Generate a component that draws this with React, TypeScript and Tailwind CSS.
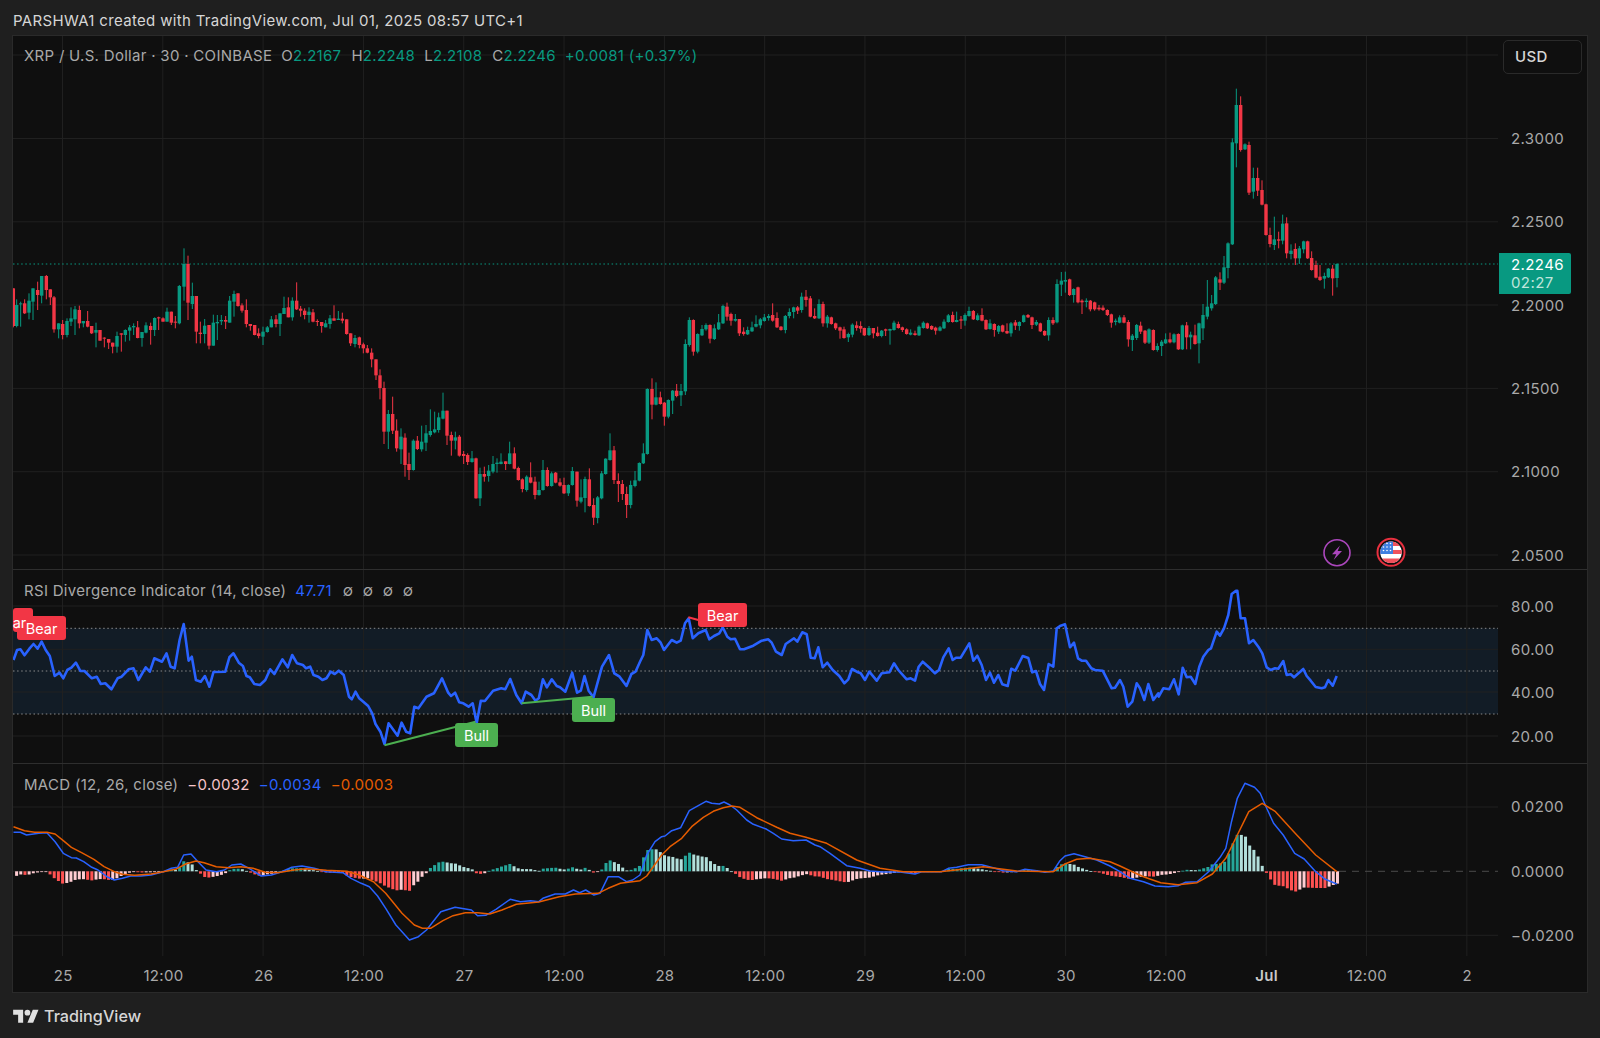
import React from "react";

type Bar = { x: number; t: number; b: number; wt: number; wb: number; g: boolean };

const parseBars = (raw: string, ox: number, oy: number): Bar[] =>
  raw
    .split(";")
    .map((s) => s.trim())
    .filter(Boolean)
    .map((s) => {
      const [zx, c, t, b, wt, wb] = s.split(/\s+/);
      return {
        x: ox + Number(zx) / 3,
        t: oy + Number(t) / 3,
        b: oy + Number(b) / 3,
        wt: oy + Number(wt) / 3,
        wb: oy + Number(wb) / 3,
        g: c === "g",
      };
    });

const S1 = `40 r 145 258 145 262;50 g 195 258 178 262;62 g 190 192 185 260;74 r 190 220 178 222;87 g 182 218 160 238;99 g 145 185 145 240;113 r 150 165 125 210;125 g 108 167 108 190;139 r 108 150 105 178;151 r 148 172 148 195;162 r 172 268 168 278;176 g 250 268 250 295;188 r 252 285 240 298;201 g 243 285 235 292;213 g 235 245 202 258;225 g 208 238 198 285;238 r 210 250 197 265;250 g 243 250 243 262;263 r 243 260 213 262;275 r 258 280 258 282;288 g 270 278 248 322;300 r 270 302 270 302;313 r 293 296 292 322;326 r 297 308 297 327;338 r 308 320 308 340;351 g 288 320 275 338;364 r 280 284 280 335;376 g 270 285 268 305;389 g 262 272 255 302;401 g 258 262 250 285;413 r 262 294 243 295;426 g 276 294 276 320;438 g 256 278 247 280;452 r 258 270 248 314;464 g 234 270 232 288;476 r 232 235 230 270;489 r 235 245 232 245;501 g 215 245 203 245;514 r 215 248 215 255;526 r 245 248 228 265;538 g 138 250 135 253;552 g 72 140 25 182;564 r 72 188 47 240;577 g 168 192 128 207;589 r 168 275 168 310;601 r 278 282 245 310;614 g 257 282 237 310;627 r 255 317 255 328;640 g 248 317 224 317;652 g 246 250 225 300;664 g 240 244 225 255;677 r 240 245 228 267;689 g 182 248 168 248;702 g 162 185 152 230;714 r 160 198 160 200;726 r 196 212 190 218;739 r 210 252 178 262;751 r 252 258 252 272;764 r 255 285 255 286;776 r 280 288 265 295;789 g 275 290 260 315;802 g 262 276 258 278;814 g 238 262 228 262;828 r 238 252 225 262;840 g 220 252 220 288;852 g 204 222 170 222;865 r 202 232 172 232;877 g 182 232 172 242;890 r 182 208 127 210;902 r 206 212 198 230;914 r 212 225 205 238;927 g 215 225 202 248;939 r 217 245 207 247;952 r 243 246 238 258;965 r 246 258 246 278;977 g 250 262 240 262;990 g 235 252 225 266;1002 r 235 242 196 242;1015 g 236 240 213 240;1027 r 236 242 218 250;1040 r 238 282 238 284;1052 r 280 310 280 318;1065 g 294 312 285 322;1078 r 292 315 290 325;1090 r 313 325 308 340;1102 r 325 338 315 340;1115 r 338 358 325 382;1128 r 358 406 358 420;1140 r 406 444 388 478;1152 r 444 575 425 612;1165 g 522 575 510 627;1178 r 522 572 470 582;1190 r 572 625 538 635`;

const S2 = `3 g 440 478 415 522;15 r 443 525 430 560;27 r 522 540 488 570;40 g 452 540 448 542;52 r 452 477 438 480;65 g 455 478 407 485;78 g 430 458 405 483;91 g 423 435 358 440;104 g 418 427 365 430;116 g 382 420 368 428;129 g 362 386 308 388;141 r 362 437 362 465;154 r 435 452 425 497;166 g 442 452 425 478;178 r 440 497 435 500;191 r 492 498 483 522;203 r 495 516 490 525;216 g 505 516 483 518;228 r 505 625 503 626;240 g 552 625 533 648;253 r 552 560 530 575;266 g 542 558 525 575;279 g 522 545 498 550;291 g 518 522 505 548;303 g 515 522 490 523;317 r 514 522 514 540;329 g 490 522 455 523;343 r 490 536 472 538;355 r 534 570 530 572;367 r 568 597 565 607;380 g 560 600 556 605;392 r 562 578 517 580;405 r 575 615 560 628;417 g 600 615 575 617;429 g 540 600 510 602;442 r 540 588 532 590;455 g 550 588 545 590;467 r 548 578 546 580;480 r 577 587 565 590;492 r 585 610 563 612;505 g 585 610 583 618;517 g 543 585 531 587;531 r 545 632 545 650;543 g 622 635 568 640;555 g 567 624 560 667;568 r 568 648 535 650;581 r 645 683 625 705;593 g 622 684 618 700;605 g 550 625 543 628;617 g 506 552 505 554;630 g 481 510 430 512;642 r 481 570 468 582;655 r 573 582 550 636;667 r 582 612 570 630;680 r 612 645 590 684;692 g 585 645 572 655;705 g 571 588 543 592;718 g 519 572 517 574;730 g 490 520 460 522;742 g 297 492 295 494;756 r 297 344 265 388;768 g 322 344 277 346;781 r 322 342 305 344;793 r 338 380 336 407;805 g 330 380 328 385;818 g 302 332 300 372;830 r 302 318 282 322;843 g 303 316 282 348;856 g 162 304 148 315;868 g 90 165 82 170;880 r 90 185 88 197;893 g 132 185 130 190;906 g 117 136 105 138;918 g 105 118 100 122;930 r 105 146 103 160;943 g 115 147 103 150;956 g 97 118 72 120;969 g 48 100 44 102;981 r 50 80 38 92;993 r 72 92 68 107;1006 g 87 92 72 95;1018 r 87 130 87 138;1031 r 125 132 112 137;1043 g 120 133 110 135;1056 g 112 124 95 126;1068 g 102 110 76 112;1081 g 88 106 84 115;1093 g 82 93 72 95;1106 g 78 84 72 92;1118 r 75 92 40 95;1131 r 84 112 67 114;1143 r 110 120 108 122;1156 g 78 120 75 130;1168 g 66 78 55 85;1181 g 52 66 50 85;1193 r 52 62 48 72`;

const S3 = `5 g 110 150 98 158;18 r 110 120 90 140;31 r 115 170 108 172;44 r 168 175 145 177;57 g 132 175 118 177;69 r 132 190 125 200;82 g 170 190 165 203;94 r 172 192 170 194;107 r 190 205 188 210;120 r 202 212 200 236;132 r 208 234 200 236;145 g 222 232 218 246;157 g 194 224 190 232;170 r 196 204 184 212;182 r 198 206 184 218;193 r 204 226 203 228;207 g 204 225 198 228;220 r 204 220 204 235;233 r 218 228 200 230;245 g 212 228 210 232;257 r 208 212 206 228;270 g 207 212 206 254;282 g 188 210 182 212;295 r 192 204 185 206;307 r 202 210 200 216;320 r 208 222 205 224;332 g 218 224 208 226;345 r 220 225 212 227;357 g 200 226 196 228;370 g 188 204 184 206;382 r 190 205 188 207;395 r 198 208 196 210;407 r 203 212 200 224;420 g 202 212 198 214;432 g 185 205 178 207;445 g 166 186 162 188;458 r 165 186 155 188;470 g 180 186 155 187;483 r 178 182 168 207;495 g 165 182 160 197;507 g 153 168 140 170;520 r 153 178 150 180;533 g 166 180 160 182;546 r 165 182 145 184;558 r 180 208 178 210;570 g 190 207 178 209;583 r 192 210 190 230;596 g 198 215 195 222;608 r 196 215 194 217;621 r 213 220 190 222;633 g 190 220 186 230;646 r 187 197 180 210;658 g 186 198 184 212;671 g 166 186 164 188;684 r 165 172 162 174;696 r 172 195 170 207;709 g 186 194 180 198;721 r 190 214 188 216;734 r 213 226 211 228;746 g 180 226 172 242;759 r 180 190 172 195;771 g 72 187 58 190;784 g 62 74 36 108;796 g 60 65 35 98;809 r 58 105 56 108;821 g 87 105 85 128;834 r 82 127 80 130;846 r 122 127 118 162;859 g 122 126 115 142;871 r 122 148 120 154;884 r 127 148 125 152;897 r 143 148 135 152;909 r 143 150 136 153;922 r 150 165 148 168;934 r 163 188 161 203;947 g 182 186 176 196;959 g 172 188 166 190;972 r 172 188 165 190;985 r 186 238 180 260;997 g 227 240 222 273;1010 g 195 234 192 240;1022 r 197 215 185 222;1035 r 212 248 210 252;1047 g 208 248 205 252;1060 r 210 270 208 272;1072 g 258 270 250 275;1085 g 245 258 240 288;1097 g 238 250 220 252;1110 r 238 247 218 250;1122 g 223 247 220 250;1135 r 222 268 220 270;1147 g 196 268 194 270;1160 r 196 232 186 268;1172 g 224 232 215 268;1185 r 226 252 194 254;1197 g 190 250 188 310`;

const S4 = `69 g 945 985 912 1020;82 g 920 950 840 958;95 g 910 925 885 932;107 g 832 912 828 915;120 r 838 848 817 870;132 g 802 848 768 852;144 g 730 804 727 835;157 g 427 733 415 735;169 g 315 430 266 502;182 r 315 450 289 455;195 g 433 448 430 450;207 r 435 578 425 585;220 g 534 575 503 596;233 r 534 572 503 588;246 r 570 614 541 616;258 r 613 705 611 707;270 r 705 732 683 742;283 g 718 735 650 750;296 r 718 722 695 745;308 g 671 722 644 733;320 r 670 760 652 775;333 g 752 762 733 778;346 r 747 775 730 795;358 g 745 775 738 792;371 g 724 748 722 760;383 r 724 775 722 777;395 r 774 810 754 812;408 r 795 833 782 835;420 r 830 840 795 843;433 g 828 836 818 866;445 g 806 832 804 834;458 r 806 835 795 887;471 g 792 834 790 862`;

const BARS: Bar[] = [
  ...parseBars(S1, 0, 240),
  ...parseBars(S2, 400, 290),
  ...parseBars(S3, 800, 260),
  ...parseBars(S4, 1180, 0),
];

type P = [number, number];
const conv = (raw: string, f: (x: number) => number, oy: number): P[] =>
  raw
    .trim()
    .split(/\s*;\s*/)
    .filter(Boolean)
    .map((s) => {
      const [x, y] = s.split(",").map(Number);
      return [f(x), oy + y / 3] as P;
    });

const z6 = (x: number) => x / 2.45;
const z3a = (x: number) => 640 + x / 3;
const z11 = (x: number) => 1000 + x / 3;
const z12 = (x: number) => 620 + x / 3;
const z7 = (x: number) => 1000 + x / 2.613;

const RSI: P[] = [
  ...conv(
    "33,270;42,240;50,238;60,256;72,236;82,222;92,236;102,215;112,240;122,258;134,318;146,308;155,325;165,300;175,293;186,278;197,303;207,303;225,325;237,320;247,342;258,340;273,358;288,325;298,320;315,298;327,295;339,330;357,292;367,305;378,265;397,275;408,250;418,290;428,295;440,210;450,162;462,272;470,260;480,330;492,335;502,318;513,350;523,306;552,305;562,262;572,250;585,278;595,288;604,318;612,322;623,342;637,345;650,330;662,298;672,312;692,268;705,292;716,255;728,280;742,285;750,295;760,290;768,315;780,320;790,330;800,325;810,305;820,312;830,302;842,315;855,380;862,388;871,365;880,385;890,395;902,408;912,430;920,462;932,485;942,522;952,460;974,497;984,458;995,485;1005,490;1015,410;1025,415;1045,380;1063,370;1083,325;1098,368;1105,378;1115,368;1125,397;1135,400;1148,410;1158,400;1168,460;1178,392;1188,393;1208,362;1228,355;1238,358;1250,327;1265,375;1278,400;1288,365;1302,375;1312,392;1320,385;1330,328;1340,352;1352,328;1364,348;1372,352;1385,365;1402,308;1414,368;1423,362;1432,318;1442,362;1454,382;1475,290;1492,255;1505,310;1518,320;1535,348;1547,312;1557,305",
    z6,
    570
  ),
  ...conv(
    "0,215;10,195;22,120;35,150;50,145;62,158;72,180;95,150;110,158;122,152;135,100;146,85;158,145;175,130;197,120;208,148;222,138;238,130;248,112;262,140;272,148;285,146;300,178;312,178;340,167;365,152;385,148;395,158;408,185;425,195;437,162;462,145;472,155;487,127;500,133;512,203;524,205;535,172;548,232;562,218;578,240;598,258;613,280;625,268;636,237;650,245;662,250;675,270;688,245;710,272;725,250;748,247;762,220;775,240;800,268;812,265;825,272;836,230;848,215;870,235;885,250;897,240;910,202;926,175;938,210;948,203;962,203;988,160;1000,212;1012,197;1025,225;1038,270;1050,248;1062,278;1075,255;1087,283;1103,288;1114,236;1126,242;1148,198;1165,204;1177,247;1188,243;1200,282;1212,300;1226,222;1240,230;1250,115;1262,107;1275,103;1290,172;1302,158;1314,205;1325,212;1338,212;1354,235;1365,240;1388,242;1415,295;1425,293;1440,270;1450,290;1463,350;1477,335;1490,280;1500,295;1513,330;1525,282;1540,330;1555,310",
    z3a,
    590
  ),
  ...conv(
    "476,320;490,295;508,298;522,268;536,313;548,233;560,262;572,260;586,282;598,230;610,200;625,180;633,175;650,125;660,137;672,115;685,75;695,12;708,2;712,2;722,85;735,85;747,160;760,150;775,170;787,190;800,232;812,240;825,235;835,236;850,213;860,255;872,253;882,262;910,237;920,258;932,272;947,291;965,295;975,292;985,270;998,287;1010,258",
    z11,
    590
  ),
];

const BLUE: P[] = [
  ...conv(
    "33,187;50,187;65,195;95,190;115,188;135,215;155,250;175,263;187,264;205,275;225,292;240,300;262,320;280,330;300,325;320,318;345,318;370,315;400,305;420,295;435,292;450,255;468,252;485,275;505,300;530,305;550,300;568,285;590,282;610,295;640,318;665,315;690,305;715,292;740,288;770,295;800,305;840,308;860,325;885,340;905,350;925,378;945,415;970,465;985,485;1003,510;1025,500;1045,480;1080,425;1115,412;1155,420;1170,437;1190,436;1215,418;1250,388;1275,395;1300,392;1320,395;1330,385;1360,372;1385,372;1405,360;1420,368;1435,360;1455,375;1470,370;1490,320;1515,320;1535,335;1550,330",
    z6,
    770
  ),
  ...conv(
    "60,255;80,195;105,155;125,140;135,138;155,122;182,113;208,62;235,47;258,34;275,40;298,42;312,36;330,45;350,60;380,90;400,103;440,118;460,130;485,147;520,152;558,150;585,165;600,170;630,190;680,227;720,235;750,243;790,246;840,246;885,252;905,245;965,245;985,235;1010,232;1045,224;1085,224;1125,235;1150,242;1190,245;1215,238;1250,242;1275,247;1300,243;1320,212;1335,198;1362,191;1395,200;1430,210;1470,228;1500,245",
    z12,
    790
  ),
  ...conv(
    "340,325;375,335;405,348;440,350;465,347;485,337;515,335;545,305;575,262;590,235;605,155;620,85;640,40;665,52;680,70;697,115;715,160;740,195;770,250;795,267;825,305;850,328;880,342",
    z7,
    770
  ),
];

const ORANGE: P[] = [
  ...conv(
    "33,170;60,182;85,187;115,187;135,192;155,212;175,232;200,248;230,268;255,290;280,305;300,313;330,316;370,312;400,305;430,298;455,282;480,273;500,278;530,290;560,293;590,290;620,295;650,307;680,308;720,300;750,296;800,301;850,304;880,315;915,335;945,370;985,430;1015,465;1035,475;1055,475;1085,452;1110,437;1140,428;1170,428;1200,432;1230,420;1265,403;1320,396;1370,380;1410,372;1465,370;1490,355;1520,340",
    z6,
    770
  ),
  ...conv(
    "60,272;80,258;100,230;125,195;150,170;185,145;215,110;250,82;280,64;310,53;335,48;360,52;410,83;470,112;510,130;555,141;620,160;710,210;780,235;850,245;960,245;1040,236;1090,230;1150,238;1190,243;1300,245;1335,222;1370,208;1410,205;1470,215;1500,228",
    z12,
    790
  ),
  ...conv(
    "340,302;375,320;420,338;465,344;515,338;555,312;590,265;620,195;650,125;685,100;720,125;770,188;825,255;880,305",
    z7,
    770
  ),
];

const interp = (pts: P[], x: number) => {
  if (x <= pts[0][0]) return pts[0][1];
  for (let i = 1; i < pts.length; i++) {
    if (x <= pts[i][0]) {
      const [x0, y0] = pts[i - 1];
      const [x1, y1] = pts[i];
      return y0 + ((y1 - y0) * (x - x0)) / (x1 - x0);
    }
  }
  return pts[pts.length - 1][1];
};

const ZERO = 871.3;
const HIST = Array.from({ length: 317 }, (_, i) => {
  const x = 16.6 + i * 4.18;
  return { x, v: interp(ORANGE, x) - interp(BLUE, x) };
}).map((h, i, a) => {
  const p = i > 0 ? a[i - 1].v : h.v;
  const up = h.v >= p;
  const color = h.v >= 0 ? (up ? "#26a69a" : "#b2dfdb") : up ? "#ffcdd2" : "#ff5252";
  return { ...h, color };
});

const toPts = (p: P[]) => p.map(([x, y]) => `${x.toFixed(1)},${y.toFixed(1)}`).join(" ");

const TICKS = Array.from({ length: 15 }, (_, i) => 62.5 + i * 100.31);
const GRID = "#202020";
const AX = 1498;

function VGrid({ y1, y2 }: { y1: number; y2: number }) {
  return (
    <>
      {TICKS.map((x) => (
        <line key={x} x1={x} x2={x} y1={y1} y2={y2} stroke={GRID} strokeWidth={1} />
      ))}
    </>
  );
}

function HGrid({ ys }: { ys: number[] }) {
  return (
    <>
      {ys.map((y) => (
        <line key={y} x1={13} x2={AX} y1={y} y2={y} stroke={GRID} strokeWidth={1} />
      ))}
    </>
  );
}

function PriceChart() {
  return (
    <svg width={1485} height={533} viewBox="13 36 1485 533" className="block shrink-0">
      <VGrid y1={36} y2={569} />
      <HGrid ys={[55, 138.5, 221.8, 305, 388.4, 471.7, 555]} />
      <line x1={13} x2={AX} y1={264} y2={264} stroke="#089981" strokeWidth={1} strokeDasharray="1.5 2.6" />
      {BARS.map((b, i) => {
        const c = b.g ? "#089981" : "#f23645";
        return (
          <g key={i}>
            <line x1={b.x} x2={b.x} y1={b.wt} y2={b.wb} stroke={c} strokeWidth={1} />
            <rect x={b.x - 1.7} y={b.t} width={3.4} height={Math.max(b.b - b.t, 1)} fill={c} />
          </g>
        );
      })}
      <circle cx={1337} cy={552.7} r={13} fill="#0f0f0f" stroke="#ab47bc" strokeWidth={1.6} />
      <polygon points="1340,545.5 1332,554.3 1336.3,554.3 1333.6,560 1342,551 1337.6,551" fill="#ab47bc" />
      <circle cx={1391} cy={552.3} r={13.5} fill="#0f0f0f" stroke="#e8303f" strokeWidth={2} />
      <clipPath id="flag">
        <circle cx={1391} cy={552.3} r={10.8} />
      </clipPath>
      <g clipPath="url(#flag)">
        <rect x={1380} y={541} width={22} height={23} fill="#ffffff" />
        <rect x={1380} y={541} width={22} height={5} fill="#f0515c" />
        <rect x={1380} y={550} width={22} height={4} fill="#f0515c" />
        <rect x={1380} y={558.5} width={22} height={6} fill="#f0515c" />
        <rect x={1380} y={541} width={13} height={13} fill="#3f7fe0" />
        {[543.5, 547, 550.5].map((y) =>
          [1383.5, 1387, 1390.5].map((x) => <circle key={`${x}-${y}`} cx={x} cy={y} r={0.8} fill="#ffffff" />)
        )}
      </g>
    </svg>
  );
}

function RsiChart() {
  return (
    <svg width={1485} height={193} viewBox="13 570 1485 193" className="block shrink-0">
      <rect x={13} y={628.3} width={1485} height={85.7} fill="#121c26" />
      <VGrid y1={570} y2={763} />
      <HGrid ys={[606, 649.3, 692, 736]} />
      {[628.3, 671, 714].map((y) => (
        <line key={y} x1={13} x2={AX} y1={y} y2={y} stroke="#8a8a8a" strokeWidth={1} strokeDasharray="1.5 2.6" />
      ))}
      <polyline points={toPts(RSI)} fill="none" stroke="#2962ff" strokeWidth={2.6} strokeLinejoin="round" />
      <line x1={384.5} y1={745.3} x2={475.5} y2={721.7} stroke="#4caf50" strokeWidth={2} />
      <line x1={521.6} y1={703.3} x2={592.7} y2={696.7} stroke="#4caf50" strokeWidth={2} />
      <line x1={688.3} y1={617.3} x2={698.3} y2={620} stroke="#f23645" strokeWidth={2} />
    </svg>
  );
}

function MacdChart() {
  return (
    <svg width={1485} height={192} viewBox="13 764 1485 192" className="block shrink-0">
      <VGrid y1={764} y2={956} />
      <HGrid ys={[807, 935.3]} />
      <line x1={13} x2={1339} y1={ZERO} y2={ZERO} stroke={GRID} strokeWidth={1} />
      <line x1={1339} x2={AX} y1={ZERO} y2={ZERO} stroke="#4a4a4a" strokeWidth={1} strokeDasharray="7 6" />
      {HIST.map((h) => (
        <rect
          key={h.x}
          x={h.x - 1.5}
          y={h.v >= 0 ? ZERO - h.v : ZERO}
          width={3}
          height={Math.max(Math.abs(h.v), 0.8)}
          fill={h.color}
        />
      ))}
      <polyline points={toPts(BLUE)} fill="none" stroke="#2962ff" strokeWidth={1.5} strokeLinejoin="round" />
      <polyline points={toPts(ORANGE)} fill="none" stroke="#e65c00" strokeWidth={1.5} strokeLinejoin="round" />
    </svg>
  );
}

function Tag({ text, color, className }: { text: string; color: string; className: string }) {
  return (
    <div
      className={`absolute flex h-[24px] items-center justify-center rounded-[3px] pt-[1px] text-[14.5px] text-white ${color} ${className}`}
    >
      {text}
    </div>
  );
}

const G = "text-[#089981]";

export default function App() {
  return (
    <div className="flex h-[1038px] w-[1600px] flex-col overflow-hidden bg-[#1f1f1f] font-[Inter,sans-serif] text-[#a9a9a9]">
      <header className="flex h-[35px] shrink-0 items-center pl-[13px] pt-[8px] text-[15px] tracking-[0.33px] text-[#d6d6d6]">
        PARSHWA1 created with TradingView.com, Jul 01, 2025 08:57 UTC+1
      </header>

      <main className="ml-[12px] flex h-[958px] w-[1576px] shrink-0 flex-col border border-[#2a2a2a] bg-[#0f0f0f]">
        <section className="relative flex h-[534px] shrink-0 border-b border-[#2e2e2e]">
          <PriceChart />
          <div className="relative flex-1 text-[15px]">
            <div className="ml-[5px] mt-[4px] flex h-[34px] w-[79px] items-center rounded-[5px] border border-[#2a2a2a] pl-[11px] text-[15px] font-medium tracking-[0.3px] text-[#d6d6d6]">
              USD
            </div>
            <div className="mt-[23.3px] flex flex-col pl-[13px] tracking-[0.4px]">
              {["2.3000", "2.2500", "2.2000", "2.1500", "2.1000", "2.0500"].map((p) => (
                <div key={p} className="flex h-[83.4px] shrink-0 items-center">
                  {p}
                </div>
              ))}
            </div>
            <div className="absolute left-[1px] top-[217px] flex h-[41px] w-[72px] flex-col justify-center rounded-r-[2px] bg-[#089981] pl-[12px] leading-[18px] tracking-[0.4px] text-white">
              <span>2.2246</span>
              <span className="text-[#bfe5dc]">02:27</span>
            </div>
          </div>
          <div className="absolute left-[11px] top-[10px] flex items-center text-[15px] leading-[20px] tracking-[0.3px]">
            <span>XRP / U.S. Dollar · 30 · COINBASE</span>
            <span className="ml-[9px]">O</span>
            <span className={G}>2.2167</span>
            <span className="ml-[10px]">H</span>
            <span className={G}>2.2248</span>
            <span className="ml-[9px]">L</span>
            <span className={G}>2.2108</span>
            <span className="ml-[10px]">C</span>
            <span className={G}>2.2246</span>
            <span className={`ml-[9px] ${G}`}>+0.0081 (+0.37%)</span>
          </div>
        </section>

        <section className="relative flex h-[194px] shrink-0 border-b border-[#2e2e2e]">
          <RsiChart />
          <div className="flex flex-1 flex-col pl-[13px] pt-[15.4px] text-[15px] tracking-[0.4px]">
            {["80.00", "60.00", "40.00", "20.00"].map((p) => (
              <div key={p} className="flex h-[43.3px] shrink-0 items-center">
                {p}
              </div>
            ))}
          </div>
          <div className="absolute left-[11px] top-[11px] flex items-center text-[15px] leading-[20px] tracking-[0.3px]">
            <span>RSI Divergence Indicator (14, close)</span>
            <span className="ml-[9px] text-[#2962ff]">47.71</span>
            <span className="ml-[11px] w-[20px]">∅</span>
            <span className="w-[20px]">∅</span>
            <span className="w-[20px]">∅</span>
            <span className="w-[20px]">∅</span>
          </div>
          <Tag text="" color="bg-[#f23645]" className="left-0 top-[38px] w-[20px]" />
          <Tag text="Bear" color="bg-[#f23645]" className="left-[4px] top-[46px] w-[49px]" />
          <Tag text="ar" color="bg-transparent" className="left-0 top-[40px] w-[13px]" />
          <Tag text="Bear" color="bg-[#f23645]" className="left-[685px] top-[33px] w-[49px]" />
          <Tag text="Bull" color="bg-[#4caf50]" className="left-[442px] top-[153px] w-[43px]" />
          <Tag text="Bull" color="bg-[#4caf50]" className="left-[559px] top-[128px] w-[43px]" />
        </section>

        <section className="relative flex h-[192px] shrink-0">
          <MacdChart />
          <div className="flex flex-1 flex-col pl-[13px] pt-[11.5px] text-[15px] tracking-[0.4px]">
            {["0.0200", "0.0000", "−0.0200"].map((p) => (
              <div key={p} className="flex h-[64.2px] shrink-0 items-center">
                {p}
              </div>
            ))}
          </div>
          <div className="absolute left-[11px] top-[11px] flex items-center text-[15px] leading-[20px] tracking-[0.3px]">
            <span>MACD (12, 26, close)</span>
            <span className="ml-[9px] text-[#f7c4ca]">−0.0032</span>
            <span className="ml-[9px] text-[#2962ff]">−0.0034</span>
            <span className="ml-[9px] text-[#e65c00]">−0.0003</span>
          </div>
        </section>

        <div className="grid h-[36px] shrink-0 grid-cols-[repeat(15,100.31px)] items-center pt-[5px] text-[15px] tracking-[0.3px]">
          {["25", "12:00", "26", "12:00", "27", "12:00", "28", "12:00", "29", "12:00", "30", "12:00", "Jul", "12:00", "2"].map(
            (t, i) => (
              <div key={i} className={`text-center ${t === "Jul" ? "font-semibold text-[#c8c8c8]" : ""}`}>
                {t}
              </div>
            )
          )}
        </div>
      </main>

      <footer className="flex flex-1 items-center gap-[5px] pl-[13px] pt-[2px] text-[#d6d6d6]">
        <svg width={26} height={20} viewBox="0 0 36 28" fill="#e0e0e0">
          <path d="M14 22H7V11H0V4h14v18zM28 22h-8l7.5-18h8L28 22z" />
          <circle cx={20} cy={8} r={4} />
        </svg>
        <span className="text-[16.2px] font-medium">TradingView</span>
      </footer>
    </div>
  );
}
